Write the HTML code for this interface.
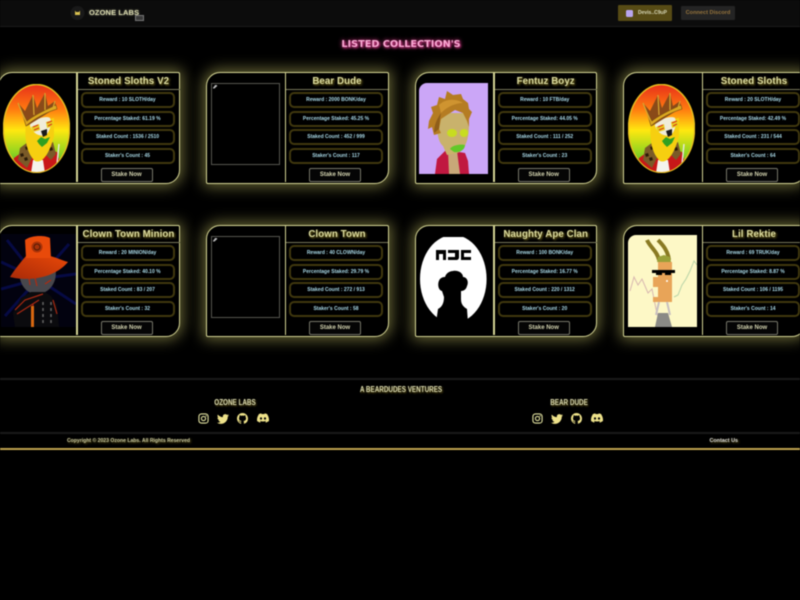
<!DOCTYPE html>
<html><head><meta charset="utf-8"><title>Ozone Labs</title>
<style>
*{box-sizing:border-box}
html,body{margin:0;width:800px;height:600px;overflow:hidden;background:#000;font-family:"Liberation Sans",sans-serif}
#w{position:absolute;left:0;top:0;width:800px;height:600px;background:#000;overflow:hidden;filter:blur(.45px)}
.abs{position:absolute}
.hdr{position:absolute;left:0;top:0;width:800px;height:27px;background:#0c0c0c;border-bottom:1px solid #1c1c1c}
.card{position:absolute;width:182.5px;height:112px;border:1.5px solid #d4d494;border-radius:14px 2px 14px 2px;background:#000;box-shadow:0 0 14px 3px rgba(225,220,115,.45)}
.div{position:absolute;left:77.5px;top:0;width:1.5px;height:109px;background:#d4d494}
.title{position:absolute;left:79px;top:0;width:102px;height:17px;border-bottom:1.5px solid #77765a;text-align:center;font:bold 9.7px/18.5px "Liberation Sans",sans-serif;letter-spacing:.1px;color:#dcdca0;text-shadow:1px 1px 2px #8a7a20;white-space:nowrap}
.pill{position:absolute;left:82px;width:94px;height:16px;border:2px solid #40380e;border-radius:5px;text-align:center;font:bold 5px/12px "Liberation Sans",sans-serif;color:#a8d8e6;white-space:nowrap}
.p1{top:19px}.p2{top:37.5px}.p3{top:56px}.p4{top:74.5px}
.btn{position:absolute;left:102px;top:94.5px;width:52px;height:14px;border:1px solid #77776a;border-radius:2px;text-align:center;font:bold 6px/12px "Liberation Sans",sans-serif;color:#d4d4b0;background:#050505}
.img{position:absolute}
.broken{position:absolute;left:3.5px;top:9.5px;width:69px;height:82.5px;border:1px solid #55554f}
.broken i{position:absolute;left:1px;top:1px;width:5px;height:4px;background:#bbb;clip-path:polygon(0 100%,60% 0,100% 30%,40% 100%)}
.ft{position:absolute;text-align:center;white-space:nowrap;color:#d8d8b0;font-weight:bold;text-shadow:1px 1px 2px #6a5c18}
.sq{transform:scaleX(.79);transform-origin:50% 50%}
.line{position:absolute;left:0;width:800px;height:2px;background:#1a1a1a}
svg{display:block}
</style></head>
<body>
<svg width="0" height="0" style="position:absolute">
<defs>
<linearGradient id="rg" x1="0" y1="0" x2="0" y2="1"><stop offset="0" stop-color="#e8301a"/><stop offset=".28" stop-color="#ff7a10"/><stop offset=".52" stop-color="#ffe810"/><stop offset=".78" stop-color="#8fd420"/><stop offset="1" stop-color="#20a030"/></linearGradient>
<linearGradient id="hatg" x1="0" y1="1" x2="1" y2="0"><stop offset="0" stop-color="#a82a08"/><stop offset="1" stop-color="#e84808"/></linearGradient>
<clipPath id="ov"><ellipse cx="33.5" cy="44.5" rx="32.5" ry="43.5"/></clipPath>
<symbol id="sloth" viewBox="0 0 67 89">
<ellipse cx="33.5" cy="44.5" rx="33" ry="44" fill="url(#rg)" stroke="#e8c020" stroke-width="1.4"/>
<g clip-path="url(#ov)">
<path d="M8 89 L11 74 L22 66 H46 L54 68 L60 89Z" fill="#c81818"/>
<path d="M15 76 L17 64 L25 58 L29 74 L24 84Z M42 62 L50 58 L53 70 L48 76 L42 70Z" fill="#7a5a28"/>
<path d="M17 70l3-1 1 3-3 1zM22 63l3-1 1 3-3 1zM21 74l3-1 1 3-3 1zM46 64l3-1 1 3-3 1z" fill="#2a1a08"/>
<path d="M30 76 H40 L42 89 H28Z" fill="#f4f4ec"/>
<path d="M23 40 C21 55 24 70 32 77 C40 80 47 68 51 52 L51 34Z" fill="#f6cf10"/>
<path d="M27 42 C26 36 44 31 47 34 C49 40 47 46 44 50 C38 54 30 50 27 42Z" fill="#f0ecd8"/>
<path d="M28 43 L36 40 L37 46 L30 48Z M43 38 L50 36 L50 42 L44 44Z" fill="#e8d020"/>
<path d="M30 43 L35 41 M31 46 L36 44 M44 39 L49 37 M45 42 L49 40" stroke="#d83018" stroke-width="1"/>
<path d="M38 47 L44 45 L44 51 L40 53Z" fill="#1a1a1a"/>
<path d="M34 57 L38 53 L42 55 L47 53 L44 59 L39 63 L36 60Z" fill="#30a020"/>
<path d="M15 19 L22 27 L30 11 L34 24 L42 9 L45 22 L52 17 L53 24 L24 42 Z" fill="#8a4a18"/>
<path d="M18 25 L23 42 C32 34 44 28 54 25 L53 21 C42 26 30 32 24 37Z" fill="#dca820" stroke="#7a5010" stroke-width=".6"/>
<path d="M15 19 L22 36 M30 11 L31 31 M42 9 L42 26 M52 17 L50 24" stroke="#d8a830" stroke-width="1.2"/>
<path d="M56 60 L54 80" stroke="#e8e8e0" stroke-width="1.4"/>
</g>
</symbol>
<symbol id="ig" viewBox="0 0 24 24"><rect x="2" y="2" width="20" height="20" rx="5.5" fill="none" stroke="#e2e2a0" stroke-width="2.4"/><circle cx="12" cy="12" r="4.6" fill="none" stroke="#e2e2a0" stroke-width="2.4"/><circle cx="17.8" cy="6.2" r="1.4" fill="#e2e2a0"/></symbol>
<symbol id="tw" viewBox="0 0 24 24"><path fill="#eee28a" d="M23.953 4.57a10 10 0 01-2.825.775 4.958 4.958 0 002.163-2.723c-.951.555-2.005.959-3.127 1.184a4.92 4.92 0 00-8.384 4.482C7.69 8.095 4.067 6.13 1.64 3.162a4.822 4.822 0 00-.666 2.475c0 1.71.87 3.213 2.188 4.096a4.904 4.904 0 01-2.228-.616v.06a4.923 4.923 0 003.946 4.827 4.996 4.996 0 01-2.212.085 4.936 4.936 0 004.604 3.417 9.867 9.867 0 01-6.102 2.105c-.39 0-.779-.023-1.17-.067a13.995 13.995 0 007.557 2.209c9.053 0 13.998-7.496 13.998-13.985 0-.21 0-.42-.015-.63A9.935 9.935 0 0024 4.59z"/></symbol>
<symbol id="gh" viewBox="0 0 16 16"><path fill="#eee28a" d="M8 0C3.58 0 0 3.58 0 8c0 3.54 2.29 6.53 5.47 7.59.4.07.55-.17.55-.38 0-.19-.01-.82-.01-1.49-2.01.37-2.53-.49-2.69-.94-.09-.23-.48-.94-.82-1.13-.28-.15-.68-.52-.01-.53.63-.01 1.08.58 1.23.82.72 1.21 1.87.87 2.33.66.07-.52.28-.87.51-1.07-1.78-.2-3.64-.89-3.64-3.95 0-.87.31-1.59.82-2.15-.08-.2-.36-1.02.08-2.12 0 0 .67-.21 2.2.82.64-.18 1.32-.27 2-.27.68 0 1.36.09 2 .27 1.53-1.04 2.2-.82 2.2-.82.44 1.1.16 1.92.08 2.12.51.56.82 1.27.82 2.15 0 3.07-1.87 3.75-3.65 3.95.29.25.54.73.54 1.48 0 1.07-.01 1.93-.01 2.2 0 .21.15.46.55.38A8.013 8.013 0 0016 8c0-4.42-3.58-8-8-8z"/></symbol>
<symbol id="dc" viewBox="0 0 24 24"><path fill="#eee28a" d="M20.317 4.37a19.791 19.791 0 0 0-4.885-1.515.074.074 0 0 0-.079.037c-.21.375-.444.864-.608 1.25a18.27 18.27 0 0 0-5.487 0 12.64 12.64 0 0 0-.617-1.25.077.077 0 0 0-.079-.037A19.736 19.736 0 0 0 3.677 4.37a.07.07 0 0 0-.032.027C.533 9.046-.32 13.58.099 18.057a.082.082 0 0 0 .031.057 19.9 19.9 0 0 0 5.993 3.03.078.078 0 0 0 .084-.028 14.09 14.09 0 0 0 1.226-1.994.076.076 0 0 0-.041-.106 13.107 13.107 0 0 1-1.872-.892.077.077 0 0 1-.008-.128 10.2 10.2 0 0 0 .372-.292.074.074 0 0 1 .077-.01c3.928 1.793 8.18 1.793 12.062 0a.074.074 0 0 1 .078.01c.12.098.246.198.373.292a.077.077 0 0 1-.006.127 12.299 12.299 0 0 1-1.873.892.077.077 0 0 0-.041.107c.36.698.772 1.362 1.225 1.993a.076.076 0 0 0 .084.028 19.839 19.839 0 0 0 6.002-3.03.077.077 0 0 0 .032-.054c.5-5.177-.838-9.674-3.549-13.66a.061.061 0 0 0-.031-.03zM8.02 15.33c-1.183 0-2.157-1.085-2.157-2.419 0-1.333.956-2.419 2.157-2.419 1.21 0 2.176 1.096 2.157 2.42 0 1.333-.956 2.418-2.157 2.418zm7.975 0c-1.183 0-2.157-1.085-2.157-2.419 0-1.333.955-2.419 2.157-2.419 1.21 0 2.176 1.096 2.157 2.42 0 1.333-.946 2.418-2.157 2.418z"/></symbol>
</defs>
</svg>
<div id="w">
<div class="hdr"></div>
<svg class="abs" style="left:70px;top:5px" width="15" height="16" viewBox="0 0 15 16"><circle cx="7.5" cy="8" r="7" fill="#191919"/><path d="M5 5.5l1 1.5h3l1-1.5V10H5z" fill="#d8c050"/></svg>
<div class="abs" style="left:89px;top:8px;font:bold 7.5px/10px 'Liberation Sans',sans-serif;letter-spacing:.1px;color:#dcdcb0;white-space:nowrap;text-shadow:0 0 2px #776">OZONE LABS</div>
<div class="abs" style="left:135px;top:15px;width:9px;height:6px;background:#3a3a3a;border:1px solid #777"></div>

<div class="abs" style="left:618px;top:5px;width:54px;height:16px;background:#574b15;border-radius:1px"></div>
<div class="abs" style="left:626px;top:9.5px;width:7px;height:7px;background:#b9a6ee;border-radius:1.5px"></div>
<div class="abs" style="left:638px;top:8px;font:bold 5px/10px 'Liberation Sans',sans-serif;color:#d8d8b8;white-space:nowrap">Devis..C9uP</div>
<div class="abs" style="left:681px;top:6px;width:54px;height:14px;background:#242424;border-radius:1px;text-align:center;font:bold 5.6px/14px 'Liberation Sans',sans-serif;color:#96743c;white-space:nowrap">Connect Discord</div>

<div class="abs" style="left:301px;top:37.5px;width:200px;text-align:center;font:bold 9.7px/14px 'DejaVu Sans',sans-serif;color:#f8a8d2;white-space:nowrap;text-shadow:0 0 4px #e0408f,1px 1px 2px #c02a78">LISTED COLLECTION'S</div>

<!-- Row 1 -->
<div class="card" style="left:-2.5px;top:72px">
<svg class="img" style="left:4px;top:10.5px" width="67" height="89"><use href="#sloth"/></svg>
<div class="div"></div><div class="title">Stoned Sloths V2</div>
<div class="pill p1">Reward : 10 SLOTH/day</div><div class="pill p2">Percentage Staked: 61.19 %</div><div class="pill p3">Staked Count : 1536 / 2510</div><div class="pill p4">Staker's Count : 45</div><div class="btn">Stake Now</div></div>

<div class="card" style="left:206px;top:72px">
<div class="broken"><i></i></div>
<div class="div"></div><div class="title">Bear Dude</div>
<div class="pill p1">Reward : 2000 BONK/day</div><div class="pill p2">Percentage Staked: 45.25 %</div><div class="pill p3">Staked Count : 452 / 999</div><div class="pill p4">Staker's Count : 117</div><div class="btn">Stake Now</div></div>

<div class="card" style="left:414.7px;top:72px">
<svg class="img" style="left:3.8px;top:9.5px" width="69" height="91" viewBox="0 0 69 91">
<path d="M8 0H69V91H0V8A8 8 0 0 1 8 0Z" fill="#cba6f7"/>
<path d="M16 91 L18 76 L26 68 L34 68 L46 70 L49 78 L50 91Z" fill="#c01840"/>
<path d="M29 68 L38 68 L41 91 L30 91Z" fill="#c8a878"/>
<path d="M19 40 C17 50 20 60 24 63 L28 72 L38 70 C46 68 50 56 50 42 L48 30 L24 30Z" fill="#c9b26c"/>
<path d="M10 38 L14 30 L12 24 L18 22 L20 14 L26 16 L28 8 L34 12 L42 11 L44 16 L49 20 L50 26 L53 29 L50 36 L50 44 L48 38 L44 30 L36 27 L28 32 L22 36 L20 46 L22 50 L15 52 L13 44 L9 46Z" fill="#b57c22"/>
<path d="M20 22 C26 16 36 15 44 20 C36 20 28 24 22 30Z" fill="#cf9430"/>
<path d="M22 30 C18 36 15 42 15 50 L20 46 L21 36Z" fill="#8f5e1a"/>
<ellipse cx="33" cy="50" rx="5" ry="4" fill="#c8dc20"/><ellipse cx="45" cy="50" rx="4.2" ry="4" fill="#c8dc20"/>
<path d="M31 66 C33 62 42 61 46 62 C46 67 40 70 35 69Z" fill="#62c828"/>
</svg>
<div class="div"></div><div class="title">Fentuz Boyz</div>
<div class="pill p1">Reward : 10 FTB/day</div><div class="pill p2">Percentage Staked: 44.05 %</div><div class="pill p3">Staked Count : 111 / 252</div><div class="pill p4">Staker's Count : 23</div><div class="btn">Stake Now</div></div>

<div class="card" style="left:623px;top:72px">
<svg class="img" style="left:4px;top:10.5px" width="67" height="89"><use href="#sloth"/></svg>
<div class="div"></div><div class="title">Stoned Sloths</div>
<div class="pill p1">Reward : 20 SLOTH/day</div><div class="pill p2">Percentage Staked: 42.49 %</div><div class="pill p3">Staked Count : 231 / 544</div><div class="pill p4">Staker's Count : 64</div><div class="btn">Stake Now</div></div>

<!-- Row 2 -->
<div class="card" style="left:-2.5px;top:225px">
<svg class="img" style="left:2px;top:8px" width="75" height="93" viewBox="0 0 75 93">
<rect width="75" height="93" fill="#02020f"/>
<path d="M37 45 L6 6 M37 45 L0 28 M37 45 L0 55 M37 45 L4 82 M37 45 L68 10 M37 45 L75 40 M37 45 L75 70" stroke="#060a44" stroke-width="3"/>
<path d="M19 32 C16 48 24 60 36 60 C48 60 58 48 54 32Z" fill="#47474c"/>
<path d="M28 44l1 7M34 44l2 8M44 50l6-4" stroke="#b02a10" stroke-width="1.2"/>
<path d="M30 58h14l6 4 6 9 2 22H14l-2-14 8-15z" fill="#0b0b0e"/>
<path d="M14 76 L24 66 L42 60 M32 93 L32 70 M52 66 L56 80 M16 80 L38 66" stroke="#a82812" stroke-width="1.2" fill="none"/>
<path d="M30 72h3v21h-3z" fill="#d86810"/><path d="M42 68v24M50 68v24" stroke="#666" stroke-width="1.5" stroke-dasharray="3 3"/>
<path d="M25 22 C18 30 12 38 9 43 C24 47 52 46 67 28 C60 26 54 23 49 22Z" fill="url(#hatg)"/>
<path d="M24 6 C30 1 44 1 49 4 L50 24 H25Z" fill="#e84a0a"/>
<circle cx="36" cy="13" r="5.5" fill="#a83208"/><circle cx="36" cy="13" r="3" fill="none" stroke="#501a06"/>
</svg>
<div class="div"></div><div class="title">Clown Town Minion</div>
<div class="pill p1">Reward : 20 MINION/day</div><div class="pill p2">Percentage Staked: 40.10 %</div><div class="pill p3">Staked Count : 83 / 207</div><div class="pill p4">Staker's Count : 32</div><div class="btn">Stake Now</div></div>

<div class="card" style="left:206px;top:225px">
<div class="broken"><i></i></div>
<div class="div"></div><div class="title">Clown Town</div>
<div class="pill p1">Reward : 40 CLOWN/day</div><div class="pill p2">Percentage Staked: 29.79 %</div><div class="pill p3">Staked Count : 272 / 913</div><div class="pill p4">Staker's Count : 58</div><div class="btn">Stake Now</div></div>

<div class="card" style="left:414.7px;top:225px">
<svg class="img" style="left:4.5px;top:10.5px" width="68" height="86" viewBox="0 0 68 86">
<ellipse cx="33.3" cy="42" rx="33.3" ry="44" fill="#fff"/>
<path d="M16 13h10v10h-3v-6h-4v6h-3z M28 13h11v7c0 2-1 3-3 3h-8v-3h7v-4h-7z M41 13h10v3h-7v4h7v3h-10z" fill="#000"/>
<path d="M33 34 C38 33 43 36 43 40 C47 40 49 45 47 49 C46 53 43 54 41 54 L41 62 C41 68 44 70 47 72 L48 86 L16 86 L18 72 C22 70 24 66 24 60 L22 54 C18 53 17 46 20 42 C22 40 24 40 25 40 C26 36 30 34 33 34Z" fill="#000"/>
</svg>
<div class="div"></div><div class="title">Naughty Ape Clan</div>
<div class="pill p1">Reward : 100 BONK/day</div><div class="pill p2">Percentage Staked: 16.77 %</div><div class="pill p3">Staked Count : 220 / 1312</div><div class="pill p4">Staker's Count : 20</div><div class="btn">Stake Now</div></div>

<div class="card" style="left:623px;top:225px">
<svg class="img" style="left:3.5px;top:8.5px" width="69" height="92" viewBox="0 0 69 92">
<path d="M8 0H69V92H0V8A8 8 0 0 1 8 0Z" fill="#fdf8c6"/>
<path d="M2 56 L6 42 L10 50 L14 44 L20 58 L24 54 L28 74 L32 88" stroke="#d8b8b0" stroke-width="1" fill="none"/>
<path d="M46 62 L50 60 L54 50 L58 44 L62 36 L66 26 L69 30" stroke="#b8d4a8" stroke-width="1" fill="none"/>
<path d="M19 5 C22 12 29 16 31 25 M30 5 C35 10 40 16 41 25" stroke="#8a7a22" stroke-width="4" fill="none"/>
<path d="M29 27h14l-1-5-6-2-6 2z" fill="#9aa038"/>
<path d="M30 27 H44 V67 H25 V62 H30 V52 H25 V42 H30Z" fill="#e8a458"/>
<rect x="24" y="35" width="23" height="3" fill="#000"/><rect x="28" y="38" width="6" height="2" fill="#000"/><rect x="37" y="38" width="6" height="2" fill="#000"/>
<circle cx="39" cy="46" r="1" fill="#fff"/>
<path d="M31 67 L28 80 M39 67 L42 80" stroke="#c8c0c0" stroke-width="2"/>
<path d="M27 92 L30 78 H40 L44 92Z" fill="#8a8a86"/>
</svg>
<div class="div"></div><div class="title">Lil Rektie</div>
<div class="pill p1">Reward : 69 TRUK/day</div><div class="pill p2">Percentage Staked: 8.87 %</div><div class="pill p3">Staked Count : 106 / 1195</div><div class="pill p4">Staker's Count : 14</div><div class="btn">Stake Now</div></div>

<!-- Footer -->
<div class="line" style="top:378px"></div>
<div class="ft sq" style="left:301px;top:384px;width:200px;font-size:8px;line-height:11px">A BEARDUDES VENTURES</div>
<div class="ft sq" style="left:184.5px;top:397px;width:100px;font-size:8px;line-height:11px">OZONE LABS</div>
<div class="ft sq" style="left:518.5px;top:397px;width:100px;font-size:8px;line-height:11px">BEAR DUDE</div>

<svg class="abs" style="left:198px;top:413px" width="11" height="11"><use href="#ig"/></svg>
<svg class="abs" style="left:217px;top:412.5px" width="12" height="12"><use href="#tw"/></svg>
<svg class="abs" style="left:237px;top:413px" width="11" height="11"><use href="#gh"/></svg>
<svg class="abs" style="left:257px;top:412px" width="12" height="12"><use href="#dc"/></svg>
<svg class="abs" style="left:532px;top:413px" width="11" height="11"><use href="#ig"/></svg>
<svg class="abs" style="left:551px;top:412.5px" width="12" height="12"><use href="#tw"/></svg>
<svg class="abs" style="left:571px;top:413px" width="11" height="11"><use href="#gh"/></svg>
<svg class="abs" style="left:591px;top:412px" width="12" height="12"><use href="#dc"/></svg>

<div class="line" style="top:432px"></div>
<div class="ft" style="left:67px;top:436px;font:bold 5.1px/10px 'Liberation Sans',sans-serif;color:#c8c8a0">Copyright © 2023 Ozone Labs. All Rights Reserved</div>
<div class="ft" style="left:709.5px;top:436px;font:bold 5.4px/10px 'Liberation Sans',sans-serif;color:#dcdcdc">Contact Us</div>
<div class="abs" style="left:0;top:448px;width:800px;height:2px;background:#bfa24e"></div>
</div>
</body></html>
